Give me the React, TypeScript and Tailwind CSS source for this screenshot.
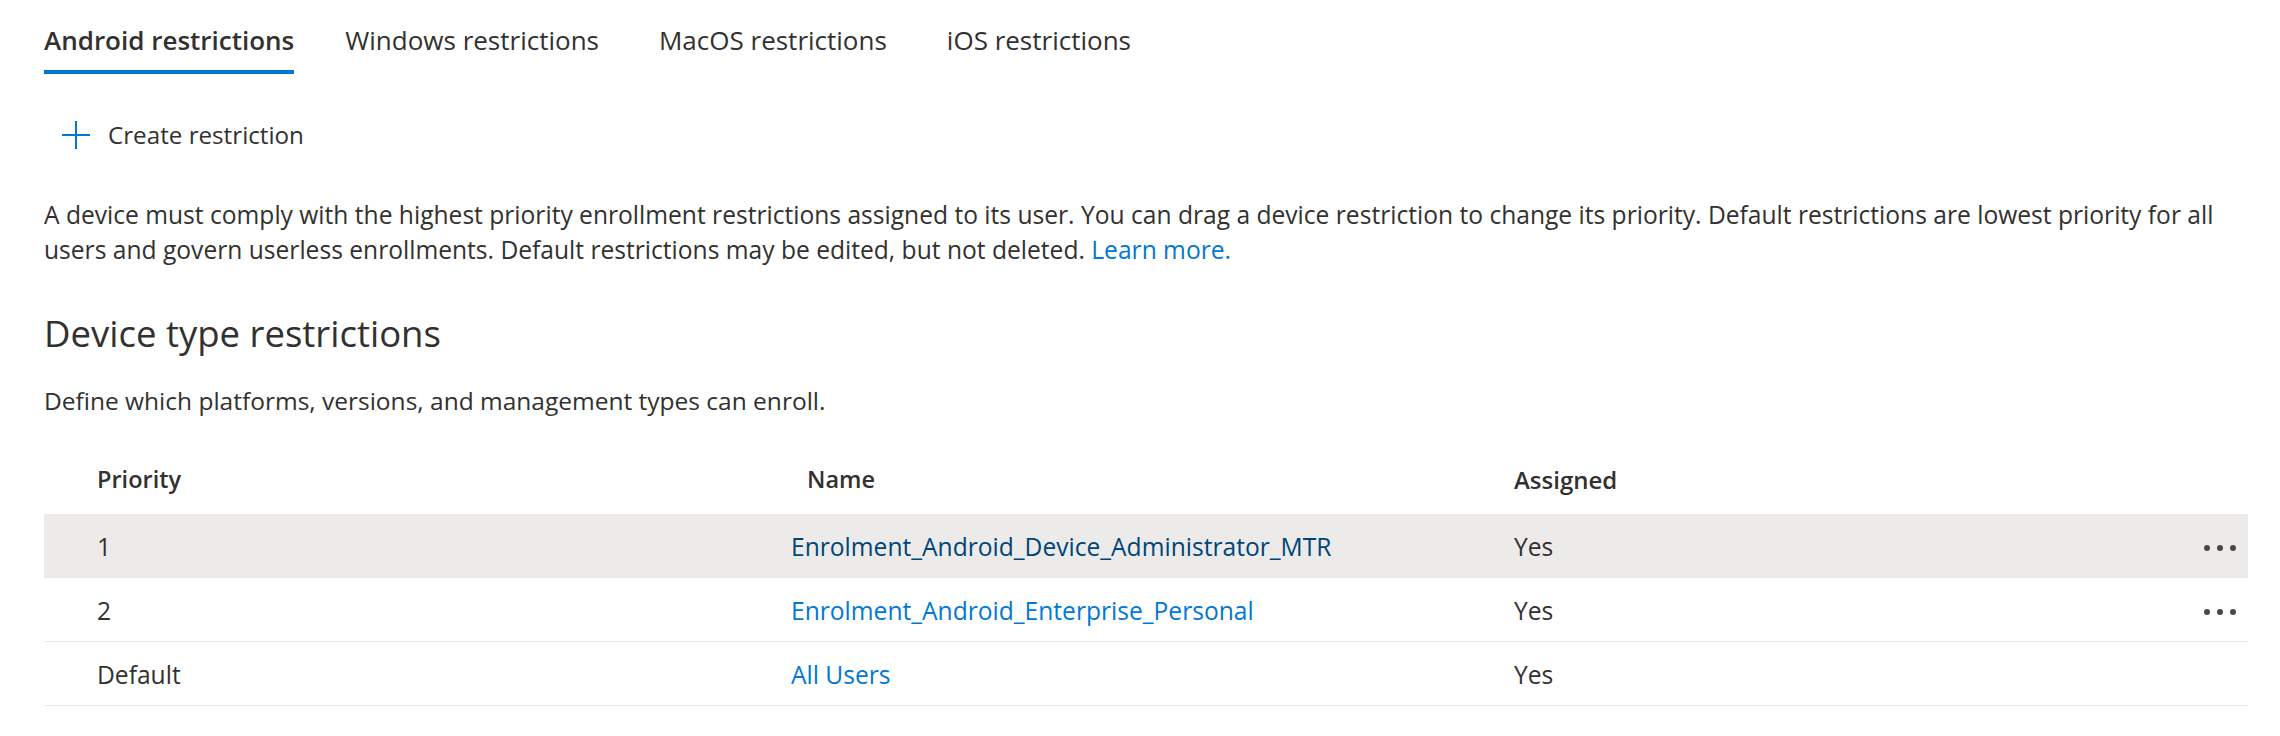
import React from "react";

const tabs = ["Android restrictions", "Windows restrictions", "MacOS restrictions", "iOS restrictions"];

const rows = [
  { priority: "1", name: "Enrolment_Android_Device_Administrator_MTR", assigned: "Yes", menu: true, active: true },
  { priority: "2", name: "Enrolment_Android_Enterprise_Personal", assigned: "Yes", menu: true, active: false },
  { priority: "Default", name: "All Users", assigned: "Yes", menu: false, active: false },
];

function PlusIcon() {
  return (
    <svg width="30" height="30" viewBox="0 0 30 30" fill="none">
      <path d="M15 1v28M1 15h28" stroke="#0078d4" strokeWidth="2" />
    </svg>
  );
}

function Dots() {
  return (
    <div className="flex items-center gap-[7px]">
      <span className="w-[6px] h-[6px] rounded-full bg-[#4a4846]" />
      <span className="w-[6px] h-[6px] rounded-full bg-[#4a4846]" />
      <span className="w-[6px] h-[6px] rounded-full bg-[#4a4846]" />
    </div>
  );
}

export default function App() {
  return (
    <div className="w-[2280px] h-[736px] bg-white text-[#323130] font-['Open_Sans',sans-serif] pl-[44px] pr-[32px]">
      {/* tabs */}
      <div className="flex gap-[60px] pt-[23px]">
        {tabs.map((t, i) => (
          <div key={t} className={`flex flex-col ${i === 0 ? "mr-[-9px]" : ""}`}>
            <span className={`text-[26px] leading-[34px] ${i === 0 ? "font-semibold" : ""}`}>{t}</span>
            <div className={`h-[4px] mt-[13px] ${i === 0 ? "bg-[#0078d4]" : "bg-transparent"}`} />
          </div>
        ))}
      </div>

      {/* command */}
      <div className="flex items-center gap-[17px] pl-[17px] mt-[44px] h-[34px]">
        <PlusIcon />
        <span className="text-[24.2px]">Create restriction</span>
      </div>

      <p className="mt-[46px] text-[24.6px] leading-[34.5px]">
        A device must comply with the highest priority enrollment restrictions assigned to its user. You can drag a
        device restriction to change its priority. Default restrictions are lowest priority for all
        <br />
        users and govern userless enrollments. Default restrictions may be edited, but not deleted.{" "}
        <a className="text-[#0078d4]">Learn more.</a>
      </p>

      <h2 className="mt-[42px] text-[36.5px] leading-[48px]">Device type restrictions</h2>

      <p className="mt-[27px] text-[24.5px] leading-[34.5px]">
        Define which platforms, versions, and management types can enroll.
      </p>

      {/* table */}
      <div className="mt-[28px] w-[2204px] text-[24.6px]">
        <div className="grid grid-cols-[747px_723px_1fr] h-[67px] items-center font-semibold text-[23.5px]">
          <div className="pl-[53px]">Priority</div>
          <div className="pl-[16px]">Name</div>
          <div className="text-[24px]">Assigned</div>
        </div>
        {rows.map((r) => (
          <div
            key={r.priority}
            className={`grid grid-cols-[747px_723px_1fr_auto] h-[64px] pt-[5px] items-center border-b border-[#edebe9] ${
              r.active ? "bg-[#edebe9]" : ""
            }`}
          >
            <div className="pl-[53px]">{r.priority}</div>
            <div className={r.active ? "text-[#004578]" : "text-[#0078d4]"}>{r.name}</div>
            <div>{r.assigned}</div>
            <div className="pr-[12px] w-[60px] flex justify-end">{r.menu ? <Dots /> : null}</div>
          </div>
        ))}
      </div>
    </div>
  );
}
